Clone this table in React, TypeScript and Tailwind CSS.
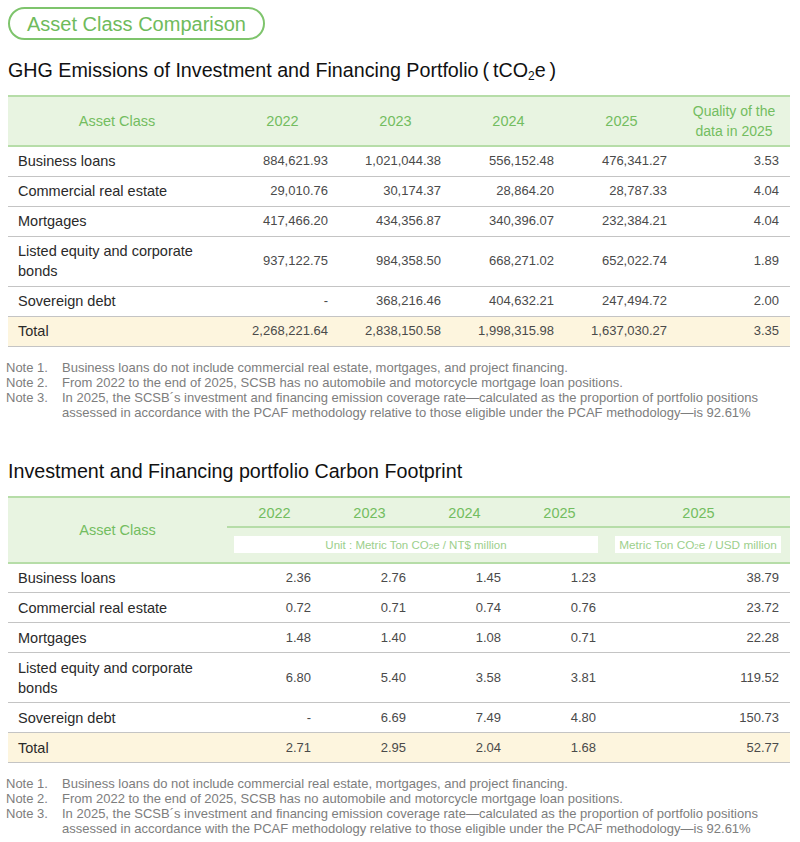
import React from 'react';

const font = { fontFamily: '"Liberation Sans", Arial, "Noto Sans CJK TC", sans-serif' };

type Row = { name: string; vals: string[]; total?: boolean; tall?: boolean };

const ghgRows: Row[] = [
    { name: 'Business loans', vals: ['884,621.93', '1,021,044.38', '556,152.48', '476,341.27', '3.53'] },
    { name: 'Commercial real estate', vals: ['29,010.76', '30,174.37', '28,864.20', '28,787.33', '4.04'] },
    { name: 'Mortgages', vals: ['417,466.20', '434,356.87', '340,396.07', '232,384.21', '4.04'] },
    { name: 'Listed equity and corporate bonds', vals: ['937,122.75', '984,358.50', '668,271.02', '652,022.74', '1.89'], tall: true },
    { name: 'Sovereign debt', vals: ['-', '368,216.46', '404,632.21', '247,494.72', '2.00'] },
    { name: 'Total', vals: ['2,268,221.64', '2,838,150.58', '1,998,315.98', '1,637,030.27', '3.35'], total: true },
];

const footRows: Row[] = [
    { name: 'Business loans', vals: ['2.36', '2.76', '1.45', '1.23', '38.79'] },
    { name: 'Commercial real estate', vals: ['0.72', '0.71', '0.74', '0.76', '23.72'] },
    { name: 'Mortgages', vals: ['1.48', '1.40', '1.08', '0.71', '22.28'] },
    { name: 'Listed equity and corporate bonds', vals: ['6.80', '5.40', '3.58', '3.81', '119.52'], tall: true },
    { name: 'Sovereign debt', vals: ['-', '6.69', '7.49', '4.80', '150.73'] },
    { name: 'Total', vals: ['2.71', '2.95', '2.04', '1.68', '52.77'], total: true },
];

const Body: React.FC<{ rows: Row[] }> = ({ rows }) => (
    <tbody>
        {rows.map((r, i) => (
            <tr key={i} className={`${r.total ? 'bg-[#fdf5de]' : ''} border-b border-[#c4c4c4]`}>
                <td className={`pl-[10px] pr-2 text-[14.5px] leading-5 text-[#2a2a2a] ${r.tall ? 'h-[50px]' : 'h-[30px]'}`}>
                    {r.tall ? <>Listed equity and corporate<br />bonds</> : r.name}
                </td>
                {r.vals.map((v, j) => (
                    <td key={j} className="pr-[11px] text-right text-[13px] leading-5 text-[#4a4a4a]">{v}</td>
                ))}
            </tr>
        ))}
    </tbody>
);

const Notes: React.FC = () => (
    <div className="-ml-[2px] mt-[13px] text-[13px] leading-[15px] text-[#7d7d7d]">
        {[
            ['Note 1.', 'Business loans do not include commercial real estate, mortgages, and project financing.'],
            ['Note 2.', 'From 2022 to the end of 2025, SCSB has no automobile and motorcycle mortgage loan positions.'],
            ['Note 3.', 'In 2025, the SCSB\u00b4s investment and financing emission coverage rate\u2014calculated as the proportion of portfolio positions assessed in accordance with the PCAF methodology relative to those eligible under the PCAF methodology\u2014is 92.61%'],
        ].map(([label, text]) => (
            <div key={label} className="flex">
                <div className="w-[56px] shrink-0">{label}</div>
                <div className="w-[710px]">{text}</div>
            </div>
        ))}
    </div>
);

const App: React.FC = () => {
    return (
        <div className="w-[800px] bg-white px-[8px] pt-[7px]" style={font}>
            <div className="flex h-[33px] w-[257px] items-center justify-center rounded-full border-2 border-[#7ec46c] text-[20px] text-[#6fbb5c]">
                Asset Class Comparison
            </div>

            <h2 className="mt-[18px] text-[19.7px] leading-6 text-[#111]">
                GHG Emissions of Investment and Financing Portfolio{'\u2009(\u2009'}tCO<sub className="text-[12px]">2</sub>e{'\u2009)'}
            </h2>

            <table className="mt-[13px] w-[782px] table-fixed border-collapse">
                <colgroup>
                    <col className="w-[218px]" />
                    <col className="w-[113px]" />
                    <col className="w-[113px]" />
                    <col className="w-[113px]" />
                    <col className="w-[113px]" />
                    <col className="w-[112px]" />
                </colgroup>
                <thead>
                    <tr className="h-[50px] border-t-2 border-b-2 border-[#b6dda8] bg-[#e8f4e1] text-[14.5px] leading-5 text-[#73bd60]">
                        <th className="font-normal">Asset Class</th>
                        <th className="font-normal">2022</th>
                        <th className="font-normal">2023</th>
                        <th className="font-normal">2024</th>
                        <th className="font-normal">2025</th>
                        <th className="text-[14px] font-normal">Quality of the<br />data in 2025</th>
                    </tr>
                </thead>
                <Body rows={ghgRows} />
            </table>

            <Notes />

            <h2 className="mt-[39px] text-[19.7px] leading-6 text-[#111]">
                Investment and Financing portfolio Carbon Footprint
            </h2>

            <table className="mt-[13px] w-[782px] table-fixed border-collapse">
                <colgroup>
                    <col className="w-[219px]" />
                    <col className="w-[95px]" />
                    <col className="w-[95px]" />
                    <col className="w-[95px]" />
                    <col className="w-[95px]" />
                    <col className="w-[183px]" />
                </colgroup>
                <thead className="bg-[#e8f4e1] text-[14.5px] leading-5 text-[#73bd60]">
                    <tr className="h-[30px] border-t-2 border-[#b6dda8]">
                        <th rowSpan={2} className="border-b-2 border-[#b6dda8] font-normal">Asset Class</th>
                        {['2022', '2023', '2024', '2025', '2025'].map((y, i) => (
                            <th key={i} className="border-b-2 border-[#b6dda8] pt-[2px] font-normal">{y}</th>
                        ))}
                    </tr>
                    <tr className="h-[36px] border-b-2 border-[#b6dda8]">
                        <th colSpan={4} className="pl-[7px] pr-[9px] font-normal">
                            <div className="flex h-[17px] items-center justify-center bg-white text-[11.5px] text-[#9ccf8c]">
                                Unit : Metric Ton CO<sub className="text-[8px]">2</sub>e / NT$ million
                            </div>
                        </th>
                        <th className="pl-[8px] pr-[9px] font-normal">
                            <div className="flex h-[17px] items-center justify-center bg-white text-[11.8px] text-[#9ccf8c]">
                                Metric Ton CO<sub className="text-[8px]">2</sub>e / USD million
                            </div>
                        </th>
                    </tr>
                </thead>
                <Body rows={footRows} />
            </table>

            <Notes />
            <div className="h-[12px]" />
        </div>
    );
};

export default App;
